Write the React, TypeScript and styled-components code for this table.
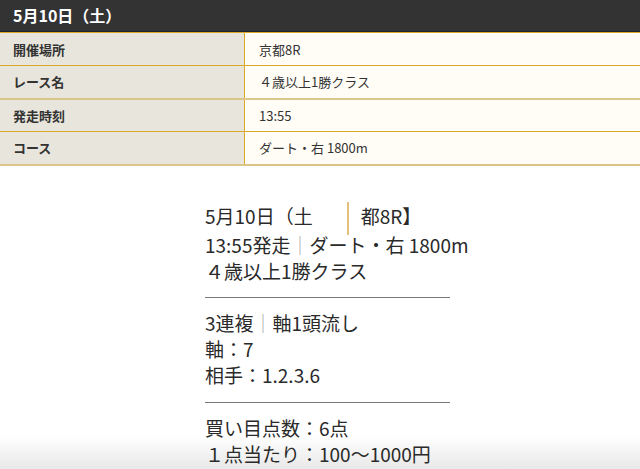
import styled, { createGlobalStyle } from "styled-components";

const Global = createGlobalStyle`
  html, body {
    margin: 0;
    padding: 0;
    background: #fff;
    font-family: "Noto Sans CJK JP", "Noto Sans", sans-serif;
    color: #222;
  }
`;

const Page = styled.div`
  width: 640px;
  height: 469px;
  overflow: hidden;
  background: linear-gradient(to bottom, #fff 0, #fff 436px, #e8e8e8 469px);
`;

const DayHeader = styled.h2`
  margin: 0;
  height: 31px;
  background: #333333;
  border-bottom: 1px solid #1c2633;
  color: #fff;
  font-size: 16px;
  font-weight: 700;
  line-height: 31px;
  padding-left: 13px;
`;

const Table = styled.table`
  width: 100%;
  border-collapse: collapse;
  font-size: 13px;
`;

interface RowProps {
  soft?: boolean;
}

const Row = styled.tr<RowProps>`
  height: 33px;
  border-top: 1px solid #dba928;
  border-bottom: ${p => (p.soft ? "2px solid #dcc58a" : "1px solid #dba928")};
`;

const Label = styled.th`
  width: 231px;
  background: #e8e6dc;
  text-align: left;
  font-weight: 700;
  color: #333;
  padding: 0 0 0 13px;
  border-right: 1px solid #dba928;
`;

const Value = styled.td`
  background: #fffdf6;
  color: #333;
  padding: 0 0 0 14px;
`;

const Ticket = styled.div`
  width: 245px;
  margin: 37px 0 0 205px;
  font-size: 19px;
  line-height: 26.2px;
  color: #2a2a2a;
`;

const Block = styled.div`
  padding: 0 0 13px;
`;

const Line = styled.div`
  white-space: nowrap;
`;

const Sep = styled.span`
  color: #aaa;
`;

const Cut = styled.span`
  display: inline-block;
  width: 34px;
  height: 33px;
  margin: -4px 12px -3px 0;
  vertical-align: -8px;
  border-right: 2px solid #e5c07a;
`;

const Rule = styled.hr`
  margin: 0 0 12px;
  border: 0;
  border-top: 1px solid #777;
`;

const rows = [
  { label: "開催場所", value: "京都8R" },
  { label: "レース名", value: "４歳以上1勝クラス", soft: true },
  { label: "発走時刻", value: "13:55" },
  { label: "コース", value: "ダート・右 1800m", soft: true },
];

export default function App() {
  return (
    <Page>
      <Global />
      <DayHeader>5月10日（土）</DayHeader>
      <Table>
        <tbody>
          {rows.map(r => (
            <Row key={r.label} soft={r.soft}>
              <Label>{r.label}</Label>
              <Value>{r.value}</Value>
            </Row>
          ))}
        </tbody>
      </Table>
      <Ticket>
        <Block>
          <Line>5月10日（土<Cut />都8R】</Line>
          <Line>13:55発走<Sep>｜</Sep>ダート・右 1800m</Line>
          <Line>４歳以上1勝クラス</Line>
        </Block>
        <Rule />
        <Block>
          <Line>3連複<Sep>｜</Sep>軸1頭流し</Line>
          <Line>軸：7</Line>
          <Line>相手：1.2.3.6</Line>
        </Block>
        <Rule />
        <Block>
          <Line>買い目点数：6点</Line>
          <Line>１点当たり：100〜1000円</Line>
        </Block>
      </Ticket>
    </Page>
  );
}
